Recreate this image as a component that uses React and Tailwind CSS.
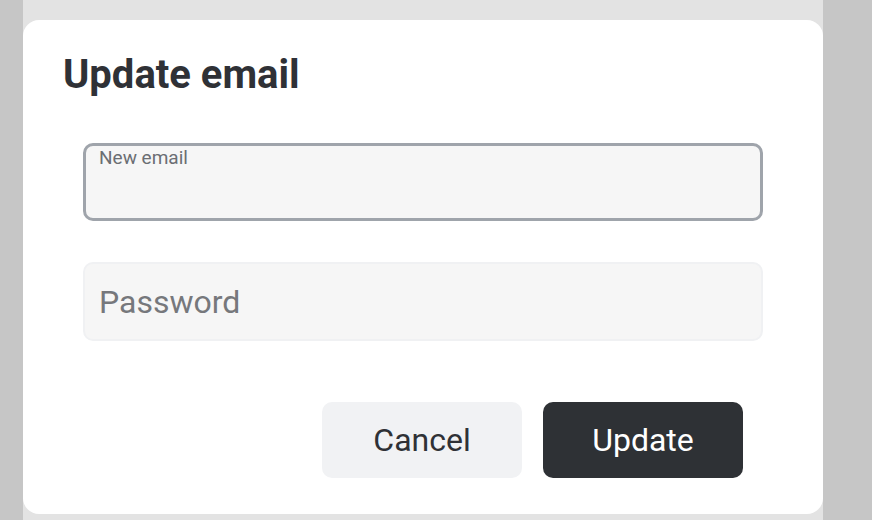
const font = { fontFamily: "Roboto, 'Liberation Sans', sans-serif" };

const App = () => {
  return (
    <div className="w-[872px] h-[520px] bg-[#c6c6c6] flex overflow-hidden" style={font}>
      <div className="ml-[23px] w-[800px] h-full bg-[#e3e3e3] pt-[20px] pb-[6px]">
        <div className="bg-white rounded-[16px] h-full px-[40px] pt-[33px]">
          {/* titulo */}
          <h2 className="text-[40px] leading-[44px] font-bold text-[#2f3136]">Update email</h2>

          <div className="mx-[20px] mt-[46px] flex flex-col gap-[41px]">
            {/* campo con foco */}
            <div className="h-[78px] border-[3px] border-[#9fa4ab] rounded-[10px] bg-[#f6f6f6] px-[13px] pt-[2px] flex flex-col">
              <label htmlFor="new-email" className="text-[19px] leading-[20px] text-[#6b6e73]">
                New email
              </label>
              <input
                id="new-email"
                type="email"
                className="bg-transparent outline-none text-[30px] text-[#2f3136] flex-1"
              />
            </div>

            {/* campo sin foco */}
            <input
              type="password"
              placeholder="Password"
              className="h-[79px] border-2 border-[#f0f1f3] rounded-[10px] bg-[#f6f6f6] px-[14px] text-[32px] text-[#2f3136] placeholder:text-[#76787c] outline-none"
            />
          </div>

          <div className="mt-[61px] flex justify-end gap-[21px] pr-[40px]">
            <button className="w-[200px] h-[76px] rounded-[10px] bg-[#f1f2f4] text-[#2f3136] text-[32px]">
              Cancel
            </button>
            <button className="w-[200px] h-[76px] rounded-[10px] bg-[#2e3135] text-white text-[32px]">
              Update
            </button>
          </div>
        </div>
      </div>
    </div>
  );
};

export default App;
